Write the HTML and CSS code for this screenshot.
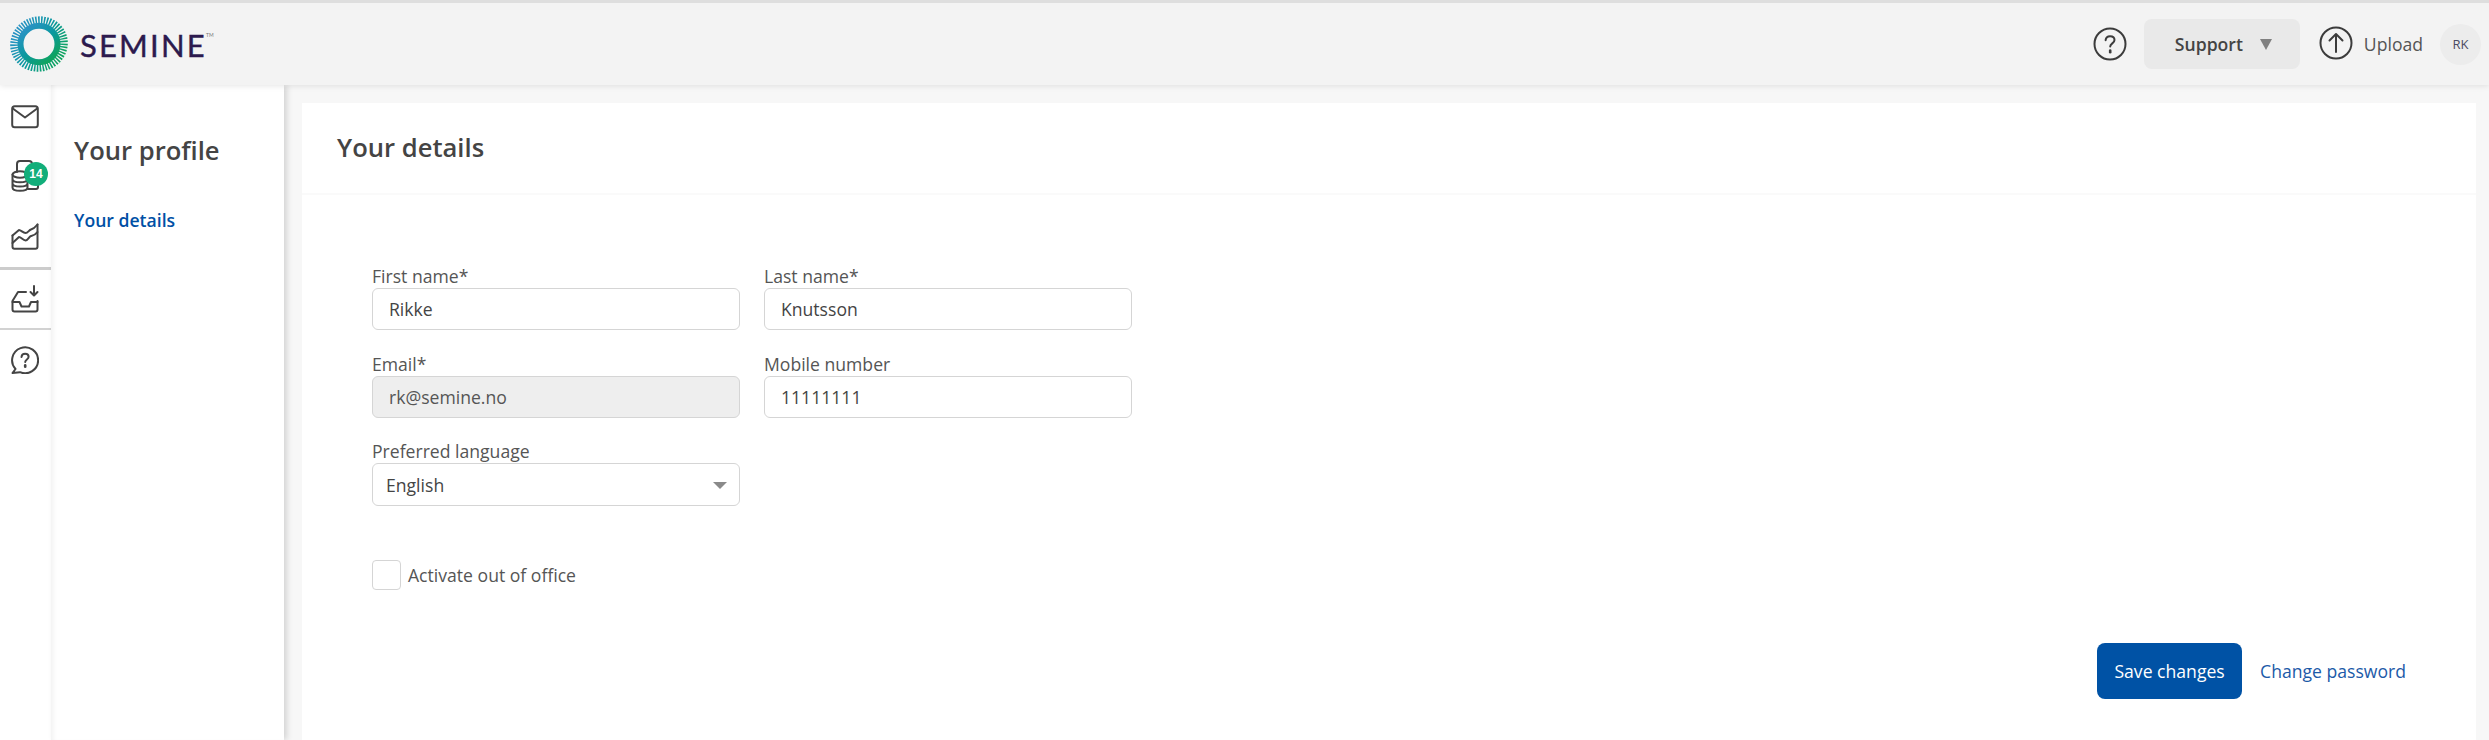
FILE: index.html
```html
<!DOCTYPE html>
<html lang="en">
<head>
<meta charset="utf-8">
<title>Semine - Your details</title>
<link rel="stylesheet" href="styles.css">
</head>
<body>
<header class="topbar">
  <a class="brand">
    <svg class="logo" viewBox="0 0 60 58" width="60" height="58" aria-hidden="true">
      <defs>
        <linearGradient id="lg" x1="0.1" y1="0.1" x2="0.8" y2="0.95">
          <stop offset="0" stop-color="#2a93c4"/>
          <stop offset="0.5" stop-color="#0b98a0"/>
          <stop offset="1" stop-color="#0fa35f"/>
        </linearGradient>
      </defs>
      <g transform="translate(30 29)">
        <ellipse class="rays" rx="25" ry="23.5" stroke="url(#lg)" transform="rotate(-20)"/>
        <ellipse class="core" rx="18.5" ry="18.2" stroke="url(#lg)"/>
      </g>
    </svg>
    <span class="wordmark">SEMINE<sup class="tm">TM</sup></span>
  </a>
  <div class="actions">
    <svg class="ico-circle" viewBox="0 0 34 34" width="34" height="34" aria-hidden="true">
      <circle cx="17" cy="17" r="15.5"/>
      <path d="M12.6 13.2c.3-2.6 2.2-4 4.5-4 2.5 0 4.4 1.500 4.4 3.800 0 3.400-4.300 3.400-4.300 6.600"/>
      <path class="dot" d="M17.2 23.6v1.6"/>
    </svg>
    <button class="support">Support<span class="tri"></span></button>
    <svg class="ico-circle upload-ico" viewBox="0 0 34 34" width="34" height="34" aria-hidden="true">
      <circle cx="17" cy="17" r="15.5"/>
      <path d="M17 26V8.500M10.500 14.500 17 8l6.500 6.500"/>
    </svg>
    <span class="upload">Upload</span>
    <span class="avatar">RK</span>
  </div>
</header>
<div class="shell">
  <nav class="rail">
    <div class="rail-group first">
      <a class="rail-item">
        <svg viewBox="0 0 28 24" width="28" height="24" aria-hidden="true">
          <rect x="1.2" y="1.2" width="25.6" height="21" rx="2.5"/>
          <path d="M1.8 3.500 14 12.500 26.200 3.500"/>
        </svg>
      </a>
      <a class="rail-item">
        <svg viewBox="0 0 28 32" width="28" height="32" aria-hidden="true">
          <path d="M6 12V4a3 3 0 0 1 3-3h9a3 3 0 0 1 3 3v8"/>
          <path d="M17 29h8a2 2 0 0 0 2-2v-4"/>
          <ellipse cx="9" cy="14.5" rx="7.5" ry="3.2"/>
          <path d="M1.500 14.500v13c0 2 3.400 3.300 7.500 3.300s7.500-1.300 7.500-3.300v-13M1.500 19c0 2 3.400 3.300 7.500 3.300s7.500-1.300 7.500-3.300M1.500 23.300c0 2 3.400 3.300 7.500 3.300s7.500-1.300 7.500-3.300"/>
        </svg>
        <span class="badge">14</span>
      </a>
      <a class="rail-item">
        <svg viewBox="0 0 28 27" width="28" height="27" aria-hidden="true">
          <path d="M1.500 12.500v11.300a2 2 0 0 0 2 2h21a2 2 0 0 0 2-2V1.500"/>
          <path d="M1.500 12.500 8 7c2 0 4 3 6.500 3S18 7 20 6.500s4.500-2.500 6.500-5"/>
          <path d="M1.500 20 8 14c2 0 4 3.500 6.500 3.500S18 13.500 20 13s4.500-1 6.500-4"/>
        </svg>
      </a>
    </div>
    <div class="rail-group thick">
      <a class="rail-item">
        <svg viewBox="0 0 28 28" width="28" height="28" aria-hidden="true">
          <path d="M15 7H7L1.500 16v8.500a2 2 0 0 0 2 2h21a2 2 0 0 0 2-2V16"/>
          <path d="M1.500 17h7l2 4.500h7.500l2-4.500h6.500"/>
          <path d="M23 1v9M19.500 7l3.500 3.500L26.500 7"/>
        </svg>
      </a>
    </div>
    <div class="rail-group">
      <a class="rail-item">
        <svg viewBox="0 0 28 28" width="28" height="28" aria-hidden="true">
          <path d="M4.500 23A13 13 0 1 1 9 26.200L1.500 27z"/>
          <path d="M10.500 11c.2-2 1.600-3.200 3.600-3.200s3.500 1.200 3.500 3c0 2.700-3.400 2.700-3.400 5.300"/>
          <path class="dot" d="M14.200 19.400v1.400"/>
        </svg>
      </a>
    </div>
  </nav>
  <aside class="side">
    <h2 class="side-title">Your profile</h2>
    <a class="side-link">Your details</a>
  </aside>
  <main class="main">
    <section class="card-head">
      <h1 class="card-title">Your details</h1>
    </section>
    <section class="card-body">
      <form class="form">
        <div class="grid">
          <label class="field">
            <span class="lbl">First name*</span>
            <input class="inp" type="text" value="Rikke">
          </label>
          <label class="field">
            <span class="lbl">Last name*</span>
            <input class="inp" type="text" value="Knutsson">
          </label>
          <label class="field">
            <span class="lbl">Email*</span>
            <input class="inp inp-off" type="text" value="rk@semine.no" disabled>
          </label>
          <label class="field">
            <span class="lbl">Mobile number</span>
            <input class="inp" type="text" value="11111111">
          </label>
          <label class="field">
            <span class="lbl">Preferred language</span>
            <span class="select-wrap">
              <select class="inp sel"><option>English</option></select>
            </span>
          </label>
        </div>
        <label class="check">
          <input class="box" type="checkbox">
          <span>Activate out of office</span>
        </label>
        <div class="foot">
          <button type="button" class="save">Save changes</button>
          <a class="pw">Change password</a>
        </div>
      </form>
    </section>
  </main>
</div>
</body>
</html>
```

FILE: styles.css
```css
* { box-sizing: border-box; }
html, body { height: 100%; }
body {
  margin: 0;
  background: #f7f7f7;
  font-family: "Open Sans", "Liberation Sans", sans-serif;
  font-size: 17.6px;
  color: #444;
  overflow: hidden;
}

/* top bar */
.topbar {
  height: 85px;
  border-top: 3px solid #dedede;
  background: #f3f3f3;
  box-shadow: 0 1px 6px rgba(0, 0, 0, .1);
  display: flex;
  align-items: center;
  justify-content: space-between;
  padding: 0 8px 0 9px;
  position: relative;
  z-index: 3;
}
.brand { display: flex; align-items: center; gap: 11px; }
.logo { display: block; flex: none; }
.rays { fill: none; stroke-width: 8; stroke-dasharray: 1.5 1.25; }
.core { fill: none; stroke-width: 6; }
.wordmark {
  font-family: Lato, "Open Sans", sans-serif;
  font-size: 31px;
  line-height: 1;
  letter-spacing: 2.2px;
  color: #2c1a4e;
  -webkit-text-stroke: .4px #2c1a4e;
  position: relative;
  top: 1px;
}
.tm {
  font-size: 5px;
  letter-spacing: 0;
  color: #777;
  -webkit-text-stroke: 0;
  vertical-align: 20px;
  line-height: 0;
  margin-left: -1px;
}
.actions { display: flex; align-items: center; }
.ico-circle { display: block; fill: none; stroke: #3c3c3c; stroke-width: 2; stroke-linecap: round; stroke-linejoin: round; }
.dot { stroke-width: 2.6; }
.support {
  width: 156px;
  height: 50px;
  margin: 0 19px 0 17px;
  border: 0;
  border-radius: 8px;
  background: #e9e9e9;
  color: #444;
  font: 600 17.6px "Open Sans", sans-serif;
  display: flex;
  align-items: center;
  padding: 0 0 0 31px;
}
.tri {
  margin-left: 17px;
  border-left: 6px solid transparent;
  border-right: 6px solid transparent;
  border-top: 11px solid #808080;
}
.upload-ico { margin-top: -2px; }
.upload { margin: 0 17px 0 11px; color: #555; }
.avatar {
  width: 41px;
  height: 41px;
  border-radius: 50%;
  background: #ececec;
  color: #4b4b63;
  font-size: 13px;
  display: flex;
  align-items: center;
  justify-content: center;
}

/* shell */
.shell { display: flex; height: 655px; }

.rail {
  width: 51px;
  flex: none;
  background: #fff;
}
.rail svg { display: block; fill: none; stroke: #444; stroke-width: 2; stroke-linecap: round; stroke-linejoin: round; }
.rail-group { display: flex; flex-direction: column; }
.rail-group.first { padding-top: 20px; height: 182px; gap: 31px; }
.rail-group.thick { border-top: 3px solid #ccc; height: 61px; padding-top: 15px; }
.rail-group:last-child { border-top: 2px solid #d2d2d2; padding-top: 16px; }
.rail-item { position: relative; display: flex; justify-content: center; padding-right: 2px; }
.badge {
  position: absolute;
  left: 24px;
  top: 2px;
  width: 24px;
  height: 24px;
  border-radius: 50%;
  background: #12ae7a;
  color: #fff;
  font: 700 12px "Liberation Sans", sans-serif;
  display: flex;
  align-items: center;
  justify-content: center;
}

.side {
  width: 233px;
  flex: none;
  background: #fff;
  box-shadow: 3px 0 6px rgba(0, 0, 0, .14), inset 5px 0 5px -3px rgba(0, 0, 0, .06);
  padding: 50px 23px 0;
  position: relative;
  z-index: 2;
}
.side-title {
  margin: 0 0 41px;
  font-size: 25.6px;
  font-weight: 600;
  line-height: 32px;
  color: #444;
}
.side-link {
  font-size: 17.6px;
  font-weight: 600;
  line-height: 24px;
  color: #0050a5;
  display: block;
}

.main {
  flex: 1;
  padding: 18px 13px 0 18px;
  min-width: 0;
}
.card-head {
  height: 90px;
  background: #fff;
  padding: 0 35px;
  display: flex;
  align-items: center;
}
.card-title {
  margin: 0;
  font-size: 25.6px;
  font-weight: 600;
  line-height: 32px;
  color: #444;
}
.card-body {
  border-top: 2px solid #fafafa;
  height: 572px;
  background: #fff;
  padding: 70px 70px 0;
}
.form { display: block; }
.grid {
  display: grid;
  grid-template-columns: 368px 368px;
  column-gap: 24px;
  row-gap: 22.5px;
  justify-content: start;
}
.field { display: flex; flex-direction: column; }
.lbl { font-size: 17.6px; line-height: 23px; color: #555; }
.inp {
  width: 100%;
  height: 42px;
  margin: 0;
  border: 1px solid #d5d5d5;
  border-radius: 6px;
  background: #fff;
  padding: 0 16px;
  font: 17.6px "Open Sans", sans-serif;
  color: #444;
  outline: 0;
}
.inp-off { background: #eee; color: #555; opacity: 1; }
.select-wrap { position: relative; display: block; }
.sel { appearance: none; padding-left: 13px; height: 43px; }
.select-wrap::after {
  content: "";
  position: absolute;
  right: 13px;
  top: 19px;
  border-left: 7px solid transparent;
  border-right: 7px solid transparent;
  border-top: 7px solid #8a8a8a;
}
.check {
  display: flex;
  align-items: center;
  gap: 7px;
  margin-top: 54px;
  color: #555;
}
.box {
  appearance: none;
  width: 29px;
  height: 30px;
  margin: 0;
  border: 1px solid #d5d5d5;
  border-radius: 4px;
  background: #fff;
}
.foot {
  display: flex;
  align-items: center;
  justify-content: flex-end;
  gap: 18px;
  margin-top: 53px;
}
.save {
  width: 145px;
  height: 56px;
  border: 0;
  border-radius: 8px;
  background: #0052a5;
  color: #fff;
  font: 500 17.6px "Open Sans", sans-serif;
}
.pw { color: #1c5aa8; }
```
